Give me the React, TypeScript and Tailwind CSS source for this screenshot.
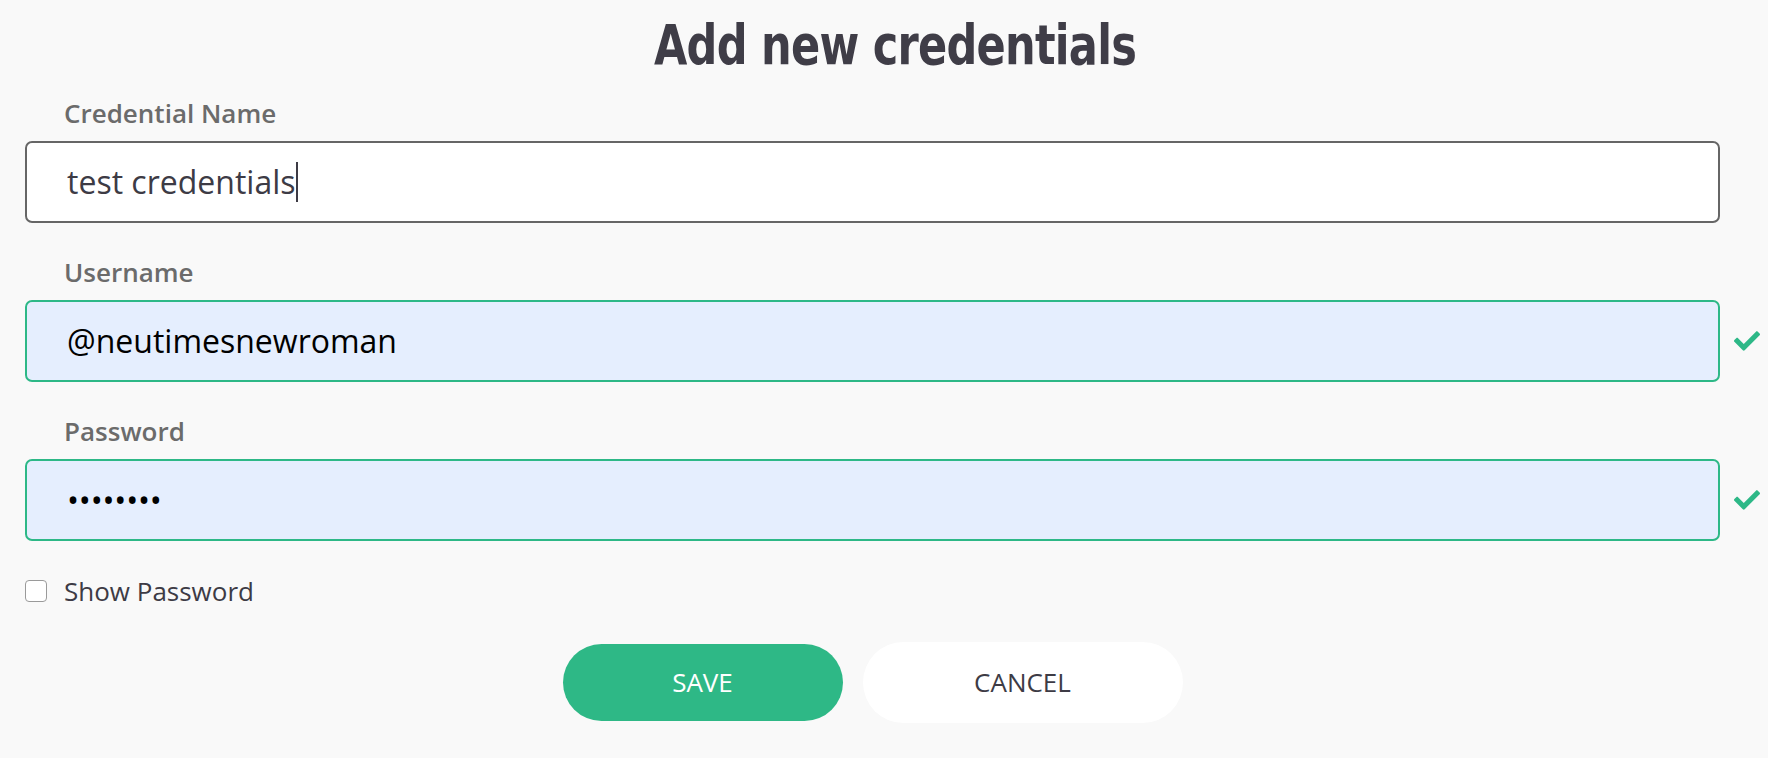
import { FaCheck } from 'react-icons/fa';

const labelCls =
  "block pl-[39px] text-[26px] leading-[30px] font-semibold text-[#6b6b6b] font-['Open_Sans',sans-serif]";

function Field({
  label,
  value,
  valid,
  type = 'text',
  caret,
}: {
  label: string;
  value: string;
  valid?: boolean;
  type?: string;
  caret?: boolean;
}) {
  return (
    <div className="flex flex-col gap-[13px]">
      <label className={labelCls}>{label}</label>
      <div className="flex items-center">
        <div
          className={
            valid
              ? 'w-[1695px] h-[82px] flex items-center pl-[40px] rounded-[7px] border-2 border-[#2db887] bg-[#e5eefe]'
              : 'w-[1695px] h-[82px] flex items-center pl-[40px] rounded-[7px] border-2 border-[#666666] bg-white'
          }
        >
          {type === 'password' ? (
            <span className="text-[32px] leading-none tracking-[-0.2px] text-black font-['Open_Sans',sans-serif]">
              {'\u2022'.repeat(value.length)}
            </span>
          ) : (
            <span
              className={
                valid
                  ? "text-[32px] text-black font-['Open_Sans',sans-serif]"
                  : "text-[32px] text-[#3d3b45] font-['Open_Sans',sans-serif]"
              }
            >
              {value}
            </span>
          )}
          {caret ? <span className="w-[2px] h-[40px] bg-[#3d3b45] ml-[1px]" /> : null}
        </div>
        {valid ? <FaCheck className="ml-[12px] w-[30px] h-[26px] text-[#2db887]" /> : null}
      </div>
    </div>
  );
}

export default function App() {
  return (
    <div className="w-[1768px] h-[758px] bg-[#f9f9f9] overflow-hidden">
      <div className="h-[90px] pl-[22px] flex items-center justify-center">
        <h1 className="whitespace-nowrap scale-x-[0.77] text-[56px] font-bold text-[#3f3d47] font-['DejaVu_Sans',sans-serif] tracking-[-1px]">
          Add new credentials
        </h1>
      </div>
      <div className="pl-[25px] pt-[8px] flex flex-col gap-[34px]">
        <Field label="Credential Name" value="test credentials" caret />
        <Field label="Username" value="@neutimesnewroman" valid />
        <Field label="Password" value="12345678" type="password" valid />
      </div>
      <div className="pl-[25px] mt-[35px] flex items-center h-[30px]">
        <span className="w-[22px] h-[22px] rounded-[4px] border border-[#9a9a9a] bg-white" />
        <span className="ml-[17px] text-[26px] text-[#3d3b45] font-['Open_Sans',sans-serif]">
          Show Password
        </span>
      </div>
      <div className="w-[1745px] mt-[36px] flex justify-center items-center gap-[20px]">
        <button className="w-[280px] h-[77px] rounded-full bg-[#2eb886] text-white text-[26px] font-['Open_Sans',sans-serif]">
          SAVE
        </button>
        <button className="w-[320px] h-[81px] rounded-full bg-white text-[#3d3b45] text-[26px] font-['Open_Sans',sans-serif]">
          CANCEL
        </button>
      </div>
    </div>
  );
}
